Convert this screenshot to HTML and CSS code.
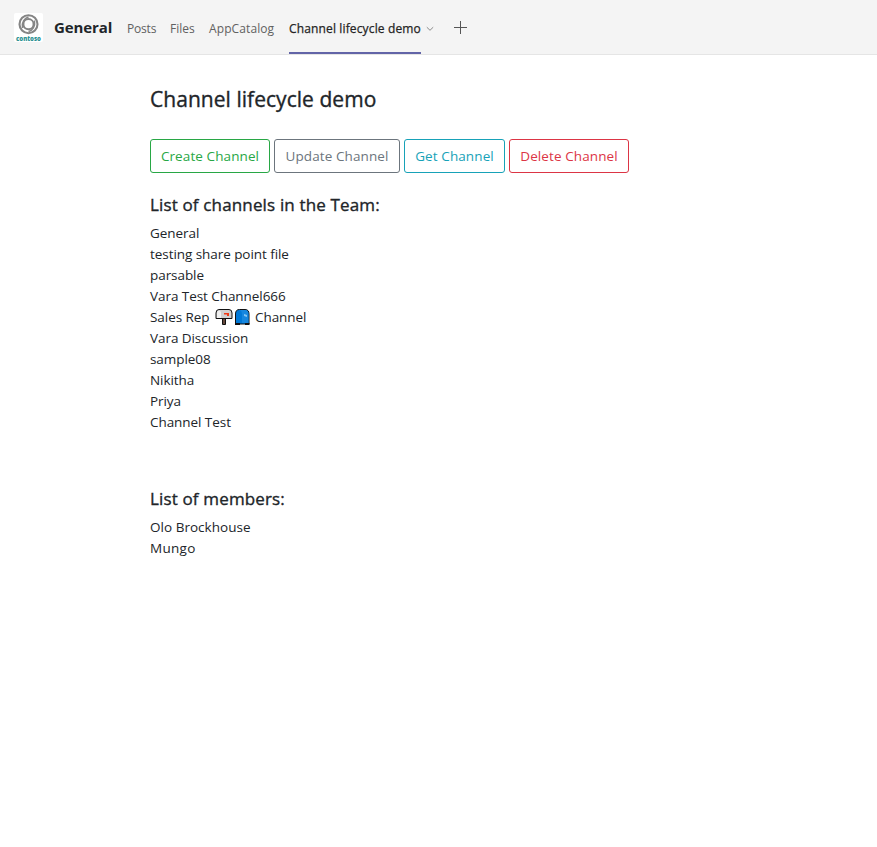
FILE: index.html
```html
<!DOCTYPE html>
<html lang="en">
<head>
<meta charset="utf-8">
<title>Channel lifecycle demo</title>
<link rel="stylesheet" href="styles.css">
</head>
<body>
<header class="topbar">
  <svg class="logo" width="29" height="29" viewBox="0 0 29 29">
    <rect width="29" height="29" rx="2" fill="#fff"/>
    <g fill="none" stroke="#858585">
      <circle cx="14.5" cy="11.2" r="9" stroke-width="2.1"/>
      <circle cx="14.5" cy="11.2" r="5.1" stroke-width="2"/>
      <path d="M8.500 15c-1-6 2-10 6-11M20.500 7.500c1 6-2 10-6 11" stroke-width="1.500"/>
    </g>
    <text class="logo-text" x="14.5" y="27.7" text-anchor="middle" textLength="25" lengthAdjust="spacingAndGlyphs">contoso</text>
  </svg>
  <span class="channel">General</span>
  <nav class="tabs">
    <a class="tab posts">Posts</a>
    <a class="tab files">Files</a>
    <a class="tab catalog">AppCatalog</a>
    <a class="tab active">Channel lifecycle demo</a>
  </nav>
  <svg class="chevron" width="8" height="6" viewBox="0 0 8 6"><path d="M.8 1.2 4 4.3l3.200-3.100" fill="none" stroke="#8a8a8a"/></svg>
  <svg class="plus" width="13" height="13" viewBox="0 0 13 13"><path d="M6.500 0v13M0 6.500h13" stroke="#555" stroke-width="1"/></svg>
</header>
<main class="content">
  <h1>Channel lifecycle demo</h1>
  <div class="actions">
    <button class="btn create">Create Channel</button>
    <button class="btn update">Update Channel</button>
    <button class="btn get">Get Channel</button>
    <button class="btn delete">Delete Channel</button>
  </div>
  <section class="channels">
    <h2 class="title-channels">List of channels in the Team:</h2>
    <div>General</div>
    <div>testing share point file</div>
    <div>parsable</div>
    <div>Vara Test Channel666</div>
    <div class="sales"><span class="sales-rep">Sales Rep</span>
      <svg class="mailbox" width="18" height="18" viewBox="0 0 18 18">
        <path d="M7.500 10h3v6.500h-3z" fill="#65483c" stroke="#111"/>
        <path d="M1 10.500V5q0-3.500 3-3.500h10q3 0 3 3.500v5.500z" fill="#d0d0d0" stroke="#111"/>
        <path d="M2 10V5q0-2.500 2-2.500T6 5v5z" fill="#f2f2f2"/>
        <path d="M9 5h5v3h-2V6.500H9z" fill="#f03a17"/>
      </svg><svg class="postbox" width="17" height="18" viewBox="0 0 17 18">
        <path d="M1.500 16V6q0-4.500 4-4.500h5.500q4 0 4 4.500v10z" fill="#0078d7" stroke="#111"/>
        <path d="M6 2h5q3.500 0 3.500 4v9H8V6q0-3-2-4z" fill="#1687df"/>
        <path d="M1 15h5v2H1zM11 15h4.500v2H11z" fill="#111"/>
        <path d="m10 6 3 1v2l-3-1z" fill="#83c5f4"/>
      </svg>
      <span>Channel</span></div>
    <div>Vara Discussion</div>
    <div>sample08</div>
    <div>Nikitha</div>
    <div>Priya</div>
    <div>Channel Test</div>
  </section>
  <section class="members">
    <h2 class="title-members">List of members:</h2>
    <div>Olo Brockhouse</div>
    <div class="mungo">Mungo</div>
  </section>
</main>
</body>
</html>
```
FILE: styles.css
```css
* { box-sizing: border-box; }
body {
  margin: 0;
  background: #fff;
  color: #212529;
  font: 14px/21px "Open Sans", "Noto Sans", sans-serif;
}
.topbar {
  display: flex;
  height: 55px;
  padding-left: 14px;
  background: #f4f4f4;
  border-bottom: 1px solid #e5e5e5;
}
.logo { margin-top: 13px; }
.logo-text { font: 800 6.500px "Open Sans", sans-serif; fill: #2b9292; }
.channel {
  width: 58px;
  margin: 0 15px 0 11px;
  font-size: 15px;
  font-weight: 700;
  letter-spacing: -.1px;
  line-height: 55px;
  white-space: nowrap;
}
.tabs { display: flex; gap: 14px; }
.tab {
  height: 54px;
  color: #616161;
  font-size: 12px;
  line-height: 57px;
  white-space: nowrap;
}
.posts { width: 29px; letter-spacing: -.2px; }
.files { width: 25px; }
.catalog { width: 66px; letter-spacing: .1px; }
.active {
  width: 132px;
  color: #242424;
  letter-spacing: .14px;
  -webkit-text-stroke: .25px currentColor;
  border-bottom: 2px solid #6264a7;
}
.chevron { margin: 26px 0 0 5px; }
.plus { margin: 21px 0 0 20px; }
.content { padding: 30px 0 0 150px; }
h1, h2 {
  margin: 0;
  font-weight: 400;
  white-space: nowrap;
  -webkit-text-stroke: .35px currentColor;
}
h1 { font-size: 21px; line-height: 28px; letter-spacing: .04px; }
.actions { display: flex; gap: 4px; margin-top: 26px; }
.btn {
  height: 34px;
  padding: 0;
  border: 1px solid;
  border-radius: 3px;
  background: #fff;
  font: inherit;
  font-size: 13.500px;
  letter-spacing: .1px;
  white-space: nowrap;
}
.create { width: 120px; color: #28a745; }
.update { width: 126px; color: #6c757d; }
.get { width: 101px; color: #17a2b8; }
.delete { width: 120px; color: #dc3545; }
h2 { font-size: 17px; line-height: 22px; margin-bottom: 7px; letter-spacing: .15px; }
.channels { margin-top: 21px; font-size: 13.500px; letter-spacing: -.06px; }
.members { margin-top: 55px; font-size: 13.500px; letter-spacing: .03px; }
.mungo { letter-spacing: .3px; }
.sales { display: flex; height: 21px; }
.sales-rep { width: 60px; }
.mailbox { margin: 1px 0 0 5px; }
.postbox { margin: 1px 4px 0 1px; }
```
